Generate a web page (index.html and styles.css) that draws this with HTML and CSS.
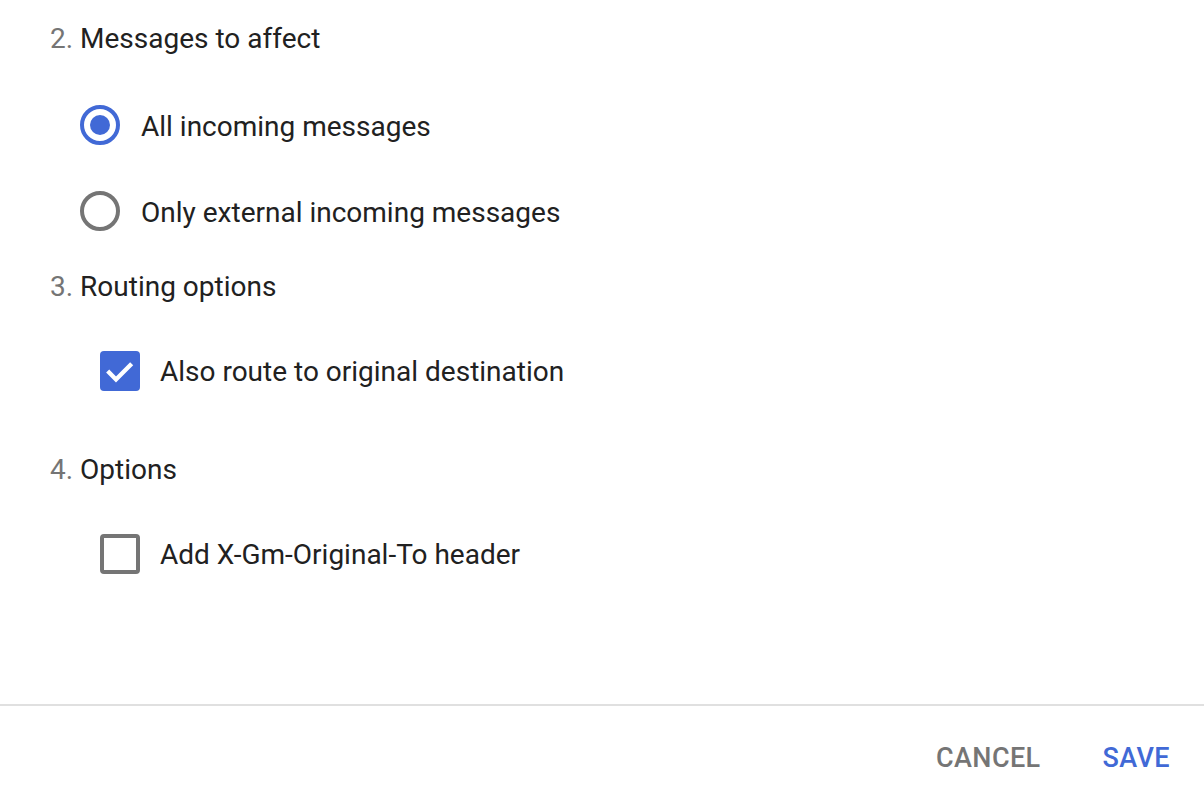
FILE: index.html
```html
<!DOCTYPE html>
<html lang="en">
<head>
    <meta charset="UTF-8">
    <title>Routing settings</title>
    <link rel="stylesheet" href="styles.css">
</head>
<body>
    <div class="dialog">
        <div class="content">
            <!-- 2. Messages to affect -->
            <h3 class="step"><span class="num">2.</span> Messages to affect</h3>
            <div class="group">
                <div class="row radio-row">
                    <span class="radio checked"></span>
                    <span class="label">All incoming messages</span>
                </div>
                <div class="row radio-row second">
                    <span class="radio"></span>
                    <span class="label">Only external incoming messages</span>
                </div>
            </div>

            <!-- 3. Routing options -->
            <h3 class="step step-routing"><span class="num">3.</span> Routing options</h3>
            <div class="group">
                <div class="row check-row">
                    <span class="checkbox checked">
                        <svg viewBox="0 0 24 24" width="40" height="40">
                            <path d="M4.6 12l5 5.1 9.4-9.4" fill="none" stroke="#fff" stroke-width="2.6"/>
                        </svg>
                    </span>
                    <span class="label">Also route to original destination</span>
                </div>
            </div>

            <!-- 4. Options -->
            <h3 class="step step-options"><span class="num">4.</span> Options</h3>
            <div class="group">
                <div class="row check-row">
                    <span class="checkbox"></span>
                    <span class="label">Add X-Gm-Original-To header</span>
                </div>
            </div>
        </div>

        <div class="footer">
            <button class="btn cancel">Cancel</button>
            <button class="btn save">Save</button>
        </div>
    </div>
</body>
</html>
```

FILE: styles.css
```css
body, html {
    margin: 0;
    padding: 0;
    height: 100%;
    background: #fff;
    font-family: Roboto, 'Noto Sans', sans-serif;
    color: #212121;
}
.dialog {
    height: 795px;
    display: flex;
    flex-direction: column;
}
.content {
    flex: 1;
    padding: 19px 0 0 50px;
}
.step {
    margin: 0;
    font-size: 28px;
    font-weight: 400;
    line-height: 40px;
    color: #212121;
}
.step .num {
    color: #757575;
}
.step-routing { margin-top: 34px; }
.step-options { margin-top: 57px; }

.row {
    display: flex;
    align-items: center;
    height: 44px;
    font-size: 28px;
}
.row .label {
    padding-top: 2px;
}
.radio-row {
    margin-top: 44px;
    padding-left: 30px;
}
.radio-row.second { margin-top: 42px; }
.check-row {
    margin-top: 42px;
    padding-left: 50px;
}
.check-row .label {
    padding-top: 1px;
}

.radio {
    box-sizing: border-box;
    width: 40px;
    height: 40px;
    border: 4px solid #757575;
    border-radius: 50%;
    margin-right: 21px;
    display: flex;
    align-items: center;
    justify-content: center;
}
.radio.checked {
    border-color: #4169d6;
}
.radio.checked::after {
    content: "";
    width: 20px;
    height: 20px;
    border-radius: 50%;
    background: #4169d6;
}

.checkbox {
    box-sizing: border-box;
    width: 40px;
    height: 40px;
    border: 4px solid #757575;
    border-radius: 4px;
    margin-right: 20px;
    display: flex;
}
.checkbox.checked {
    border: none;
    background: #4169d6;
}

.footer {
    border-top: 2px solid #e0e0e0;
    height: 89px;
    display: flex;
    justify-content: flex-end;
    align-items: center;
    padding-right: 18px;
    gap: 30px;
}
.btn {
    background: none;
    border: none;
    font-family: Roboto, 'Noto Sans', sans-serif;
    font-size: 27px;
    font-weight: 500;
    text-transform: uppercase;
    letter-spacing: 0.4px;
    padding: 14px 16px 0;
    cursor: pointer;
}
.cancel { color: #757575; }
.save { color: #4169d6; }
```
